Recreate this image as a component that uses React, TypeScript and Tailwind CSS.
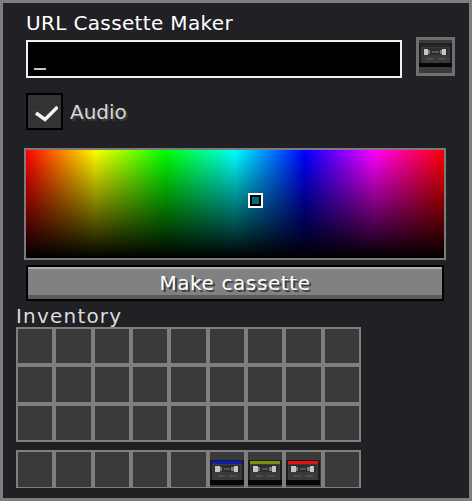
const FONT = "font-['DejaVu_Sans',sans-serif]";

function Cassette({ stripe, className }: { stripe?: string; className?: string }) {
  return (
    <svg viewBox="0 0 32 32" className={className} shapeRendering="crispEdges">
      <rect x="0" y="7" width="32" height="23" fill="#1c1c1c" />
      <rect x="2" y="11" width="28" height="15" fill="#3a3a3a" />
      <rect x="2" y="8" width="28" height="3" fill={stripe ?? "#262626"} />
      <rect x="4" y="12" width="24" height="6" fill="#2c2c2c" />
      <rect x="5" y="13" width="4" height="5" fill="#c4c4c4" />
      <rect x="22" y="13" width="4" height="5" fill="#c4c4c4" />
      <rect x="9" y="14" width="2" height="3" fill="#777777" />
      <rect x="20" y="14" width="2" height="3" fill="#777777" />
      <rect x="13" y="15" width="6" height="1" fill="#555555" />
      <rect x="7" y="21" width="7" height="2" fill="#4d4d4d" />
      <rect x="18" y="21" width="7" height="2" fill="#4d4d4d" />
      <rect x="0" y="26" width="32" height="4" fill="#050505" />
    </svg>
  );
}

function Slot({ stripe }: { stripe?: string }) {
  return (
    <div className="flex items-center justify-center bg-[#3a3a3a]">
      {stripe && <Cassette stripe={stripe} className="h-[35px] w-[35px]" />}
    </div>
  );
}

export default function App() {
  const hotbar: (string | undefined)[] = [
    undefined, undefined, undefined, undefined, undefined,
    "#0a1fb4", "#7f8f10", "#e81010", undefined,
  ];

  return (
    <div className={`${FONT} h-[501px] w-[472px] overflow-hidden border-[3px] border-[#7d7d7d] bg-[#202025] text-[#e8e8e8]`}>
      <div className="flex flex-col pl-[13px] pt-[8px]">
        <h1 className="ml-[10px] h-[26px] text-[20px] leading-[24px] tracking-[0.35px] text-white">URL Cassette Maker</h1>

        <div className="ml-[10px] flex items-start">
          <div className="mt-[3px] flex h-[38px] w-[376px] items-end border-2 border-[#f0f0f0] bg-black pb-[4px] pl-[6px]">
            <div className="mb-[2px] h-[2px] w-[12px] bg-[#c8c8c8]" />
          </div>
          <button className="ml-[14px] flex h-[39px] w-[39px] items-center justify-center border-[3px] border-[#6f6f6f] bg-[#3a3a3a]">
            <Cassette className="-mt-[8px] h-[33px] w-[33px]" />
          </button>
        </div>

        <div className="ml-[10px] mt-[15px] flex items-center">
          <div className="flex h-[37px] w-[37px] items-center justify-center border-2 border-black bg-[#333333]">
            <svg viewBox="0 0 26 20" className="h-[20px] w-[26px]">
              <path d="M4 11l9 6.5L25.5 5" fill="none" stroke="#f4f4f4" strokeWidth="3.4" />
            </svg>
          </div>
          <span className="ml-[7px] text-[20px] leading-[24px] text-[#d8d8d8] [text-shadow:2px_2px_0_#3c3c3c]">Audio</span>
        </div>

        <div className="relative ml-[8px] mt-[18px] h-[112px] w-[422px] border-2 border-[#7b7b7b] bg-[linear-gradient(to_bottom,transparent,#000),linear-gradient(to_right,#ff0000,#ffff00_16.67%,#00ff00_33.33%,#00ffff_50%,#0000ff_66.67%,#ff00ff_83.33%,#ff0000)]">
          <div className="absolute left-[222px] top-[43px] h-[15px] w-[15px] border-2 border-white bg-black p-[2px]">
            <div className="h-full w-full bg-[#036a80]" />
          </div>
        </div>

        <button className="ml-[10px] mt-[5px] flex h-[36px] w-[418px] items-center justify-center border-2 border-black bg-[#818181] text-[20px] leading-[24px] tracking-[0.6px] text-white shadow-[inset_0_2px_0_#ababab,inset_0_-4px_0_#5a5a5a] [text-shadow:2px_2px_0_#3c3c3c]">
          Make cassette
        </button>

        <div className="mt-[3px] h-[23px] text-[20px] leading-[24px] tracking-[1.2px] text-[#dcdcdc]">Inventory</div>

        <div className="grid h-[115px] w-[345px] grid-cols-9 grid-rows-3 gap-[4px] bg-[#7f7f7f] p-[2px]">
          {Array.from({ length: 27 }).map((_, i) => (
            <Slot key={i} />
          ))}
        </div>

        <div className="mt-[8px] grid h-[38px] w-[345px] grid-cols-9 gap-[4px] bg-[#7f7f7f] p-[2px]">
          {hotbar.map((stripe, i) => (
            <Slot key={i} stripe={stripe} />
          ))}
        </div>
      </div>
    </div>
  );
}
